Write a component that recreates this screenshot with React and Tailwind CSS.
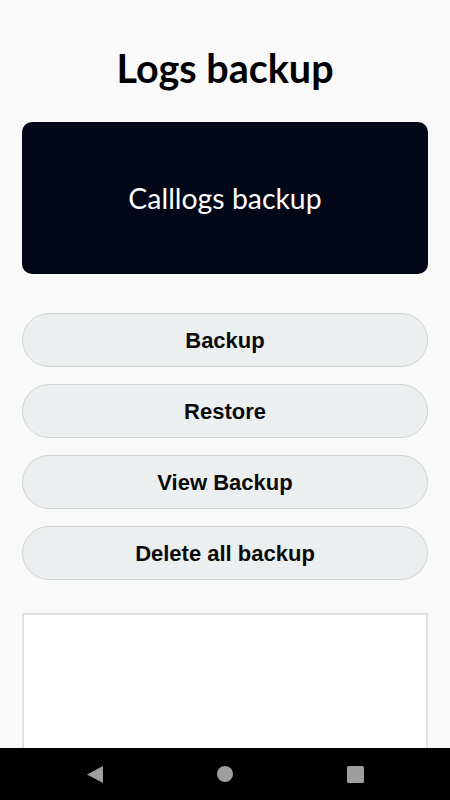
import React from 'react'

const buttons = ['Backup', 'Restore', 'View Backup', 'Delete all backup']

export default function App() {
    return (
        <div className="flex h-[800px] w-[450px] flex-col overflow-hidden bg-[#f9f9f9]">
            <div className="flex flex-1 flex-col overflow-hidden px-[22px]">
                <h1 className="mt-[40px] text-center text-[39.5px] font-bold leading-[56px] text-black" style={{ fontFamily: 'Lato, sans-serif' }}>Logs backup</h1>
                <div className="mt-[26px] flex h-[152px] items-center justify-center rounded-[10px] bg-[#020817]">
                    <span className="text-[28.4px] text-white" style={{ fontFamily: 'Lato, sans-serif' }}>Calllogs backup</span>
                </div>
                <div className="mt-[39px] flex flex-col gap-[17px]">
                    {buttons.map(b => (
                        <button key={b} className="h-[54px] rounded-full border border-[#cfd3d4] bg-[#eceff0] pt-px text-[22px] font-bold text-[#0a0a0a]" style={{ fontFamily: '"Liberation Sans", Arial, sans-serif' }}>{b}</button>
                    ))}
                </div>
                <div className="mt-[33px] flex-1 border-2 border-b-0 border-[#e0e0e0] bg-white" />
            </div>
            <div className="flex h-[52px] shrink-0 items-center justify-center gap-[114px] bg-black">
                <svg width="16" height="17" viewBox="0 0 16 17"><path d="M16 0 L16 17 L0 8.5 Z" fill="#9e9e9e" /></svg>
                <svg width="16" height="16" viewBox="0 0 16 16"><circle cx="8" cy="8" r="8" fill="#9e9e9e" /></svg>
                <svg width="17" height="17" viewBox="0 0 17 17"><rect width="17" height="17" rx="1.5" fill="#9e9e9e" /></svg>
            </div>
        </div>
    )
}
